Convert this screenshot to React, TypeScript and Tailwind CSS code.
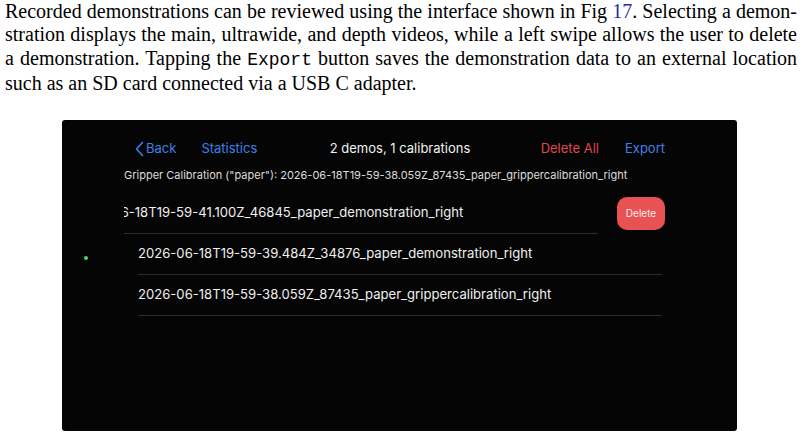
import React from 'react';

const rows = [
  '2026-06-18T19-59-39.484Z_34876_paper_demonstration_right',
  '2026-06-18T19-59-38.059Z_87435_paper_grippercalibration_right',
];

export default function App() {
  return (
    <div className="w-[804px] h-[435px] bg-white overflow-hidden">
      {/* paper paragraph */}
      <div className="pl-[5px] w-[797px] font-['Liberation_Serif',serif] text-[20px] leading-[23.4px] text-black">
        <p className="text-justify [text-align-last:justify]">
          Recorded demonstrations can be reviewed using the interface shown in Fig{' '}
          <span className="text-[#2a2aa6]">17</span>. Selecting a demon-
        </p>
        <p className="text-justify [text-align-last:justify]">
          stration displays the main, ultrawide, and depth videos, while a left swipe allows the user to delete
        </p>
        <p className="text-justify [text-align-last:justify]">
          a demonstration. Tapping the{' '}
          <span className="font-['Liberation_Mono',monospace] text-[18px]">Export</span> button saves the
          demonstration data to an external location
        </p>
        <p>such as an SD card connected via a USB C adapter.</p>
      </div>

      {/* app screenshot */}
      <div className="relative ml-[62px] mt-[24px] w-[675px] h-[311px] bg-[#050505] rounded-[3px] font-['Inter',sans-serif]">
        <div className="grid grid-cols-[1fr_auto_1fr] items-center h-[20px] pl-[73px] pr-[72px] pt-[19px] box-content text-[13px]">
          <div className="flex items-center gap-[25px] text-[#3d82ea]">
            <span className="flex items-center gap-[2px]">
              <svg width="9" height="16" viewBox="0 0 9 16" fill="none">
                <path d="M7.5 1.5 L1.5 8 L7.5 14.5" stroke="#3d82ea" strokeWidth="1.6" strokeLinecap="round" strokeLinejoin="round" />
              </svg>
              Back
            </span>
            <span>Statistics</span>
          </div>
          <div className="text-[#f2f2f2]">2 demos, 1 calibrations</div>
          <div className="flex items-center justify-end gap-[26px]">
            <span className="text-[#e0474c]">Delete All</span>
            <span className="text-[#3d82ea]">Export</span>
          </div>
        </div>

        <div className="mt-[9px] ml-[62px] text-[11px] leading-[14px] text-[#dcdcdc] whitespace-nowrap">
          Gripper Calibration ("paper"): 2026-06-18T19-59-38.059Z_87435_paper_grippercalibration_right
        </div>

        <div className="mt-[11px] ml-[62px] w-[552px] overflow-hidden text-[13.1px] text-[#f0f0f0]">
          <div className="flex items-center h-[41px]">
            <div className="shrink-0 ml-[-50px] w-[524px] h-full flex items-center border-b border-[#2c2c2c] whitespace-nowrap">
              2026-06-18T19-59-41.100Z_46845_paper_demonstration_right
            </div>
            <button className="shrink-0 ml-[19px] w-[48px] h-[33px] rounded-[10px] bg-[#e85252] text-[10px] text-[#fbecec]">
              Delete
            </button>
          </div>
          {rows.map((r) => (
            <div key={r} className="ml-[14px] w-[524px] h-[41px] flex items-center border-b border-[#2c2c2c] whitespace-nowrap">
              {r}
            </div>
          ))}
        </div>

        <div className="absolute left-[22px] top-[136px] w-[4px] h-[4px] rounded-full bg-[#4cd964]" />
      </div>
    </div>
  );
}
